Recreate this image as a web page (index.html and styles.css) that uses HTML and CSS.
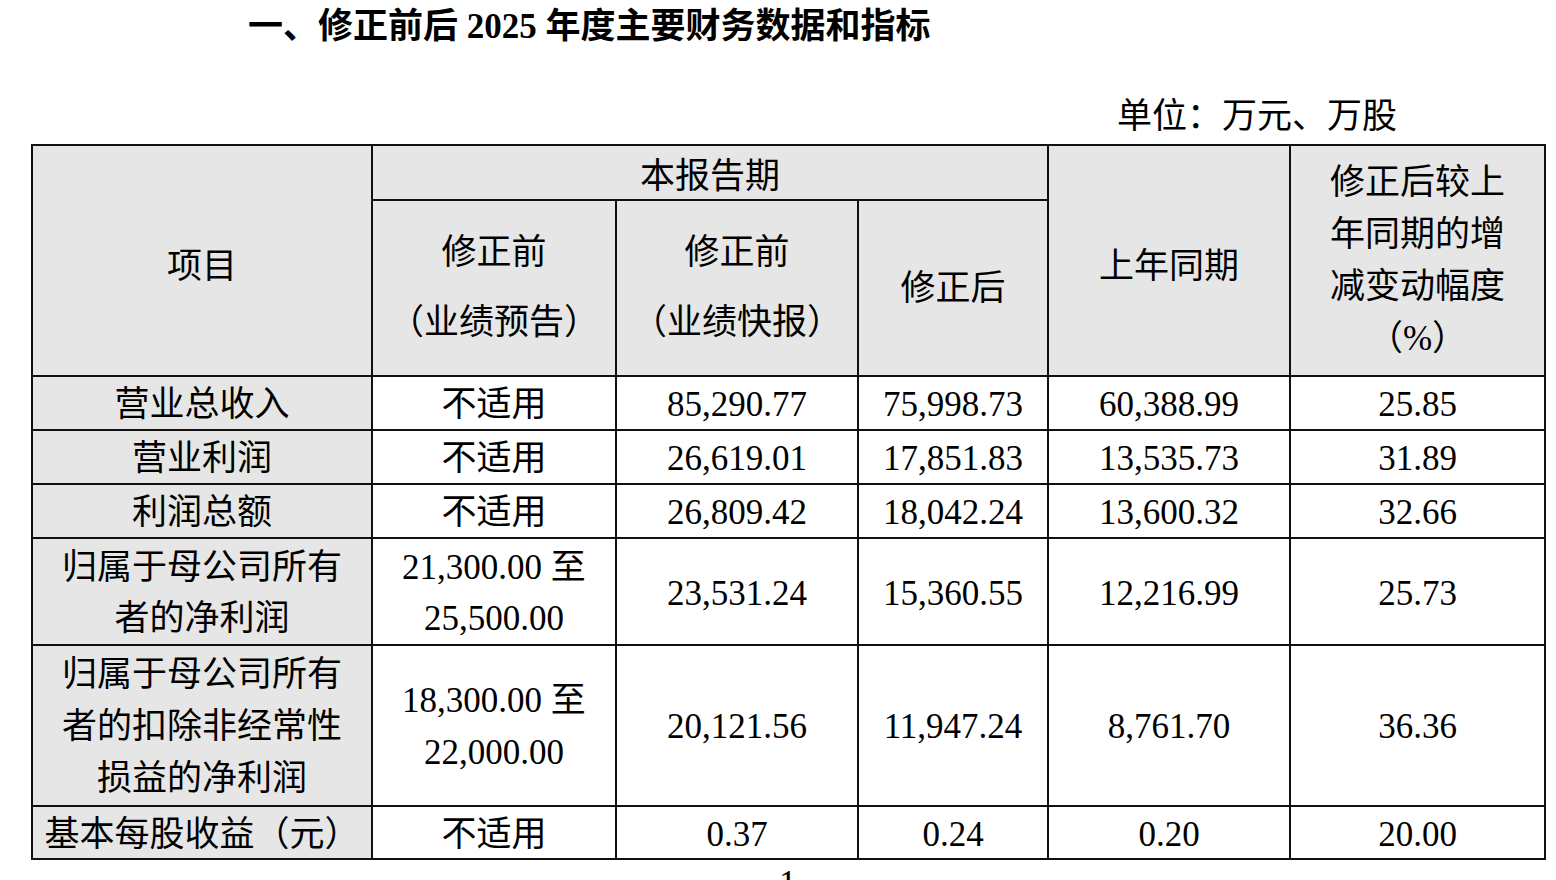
FILE: index.html
```html
<!DOCTYPE html>
<html lang="zh-CN">
<head>
<meta charset="utf-8">
<title>修正前后 2025 年度主要财务数据和指标</title>
<link rel="stylesheet" href="styles.css">
</head>
<body>
<div class="page">
  <h1 class="title">一、修正前后 2025 年度主要财务数据和指标</h1>
  <div class="unit">单位：万元、万股</div>
  <table class="fin">
    <colgroup>
      <col class="c1"><col class="c2"><col class="c3"><col class="c4"><col class="c5"><col class="c6">
    </colgroup>
    <thead>
      <tr class="r-h1">
        <th rowspan="2" class="tall">项目</th>
        <th colspan="3" class="group">本报告期</th>
        <th rowspan="2" class="tall">上年同期</th>
        <th rowspan="2" class="multi">修正后较上<br>年同期的增<br>减变动幅度<br>（%）</th>
      </tr>
      <tr class="r-h2">
        <th class="pair"><span>修正前</span><span>（业绩预告）</span></th>
        <th class="pair"><span>修正前</span><span>（业绩快报）</span></th>
        <th>修正后</th>
      </tr>
    </thead>
    <tbody>
      <tr class="r-1">
        <td class="item">营业总收入</td>
        <td>不适用</td>
        <td class="num">85,290.77</td>
        <td class="num">75,998.73</td>
        <td class="num">60,388.99</td>
        <td class="num">25.85</td>
      </tr>
      <tr class="r-1">
        <td class="item">营业利润</td>
        <td>不适用</td>
        <td class="num">26,619.01</td>
        <td class="num">17,851.83</td>
        <td class="num">13,535.73</td>
        <td class="num">31.89</td>
      </tr>
      <tr class="r-1">
        <td class="item">利润总额</td>
        <td>不适用</td>
        <td class="num">26,809.42</td>
        <td class="num">18,042.24</td>
        <td class="num">13,600.32</td>
        <td class="num">32.66</td>
      </tr>
      <tr class="r-2">
        <td class="item">归属于母公司所有<br>者的净利润</td>
        <td class="num">21,300.00 至<br>25,500.00</td>
        <td class="num">23,531.24</td>
        <td class="num">15,360.55</td>
        <td class="num">12,216.99</td>
        <td class="num">25.73</td>
      </tr>
      <tr class="r-3">
        <td class="item">归属于母公司所有<br>者的扣除非经常性<br>损益的净利润</td>
        <td class="num">18,300.00 至<br>22,000.00</td>
        <td class="num">20,121.56</td>
        <td class="num">11,947.24</td>
        <td class="num">8,761.70</td>
        <td class="num">36.36</td>
      </tr>
      <tr class="r-1b">
        <td class="item">基本每股收益（元）</td>
        <td>不适用</td>
        <td class="num">0.37</td>
        <td class="num">0.24</td>
        <td class="num">0.20</td>
        <td class="num">20.00</td>
      </tr>
    </tbody>
  </table>
  <div class="pageno">1</div>
</div>
</body>
</html>
```

FILE: styles.css
```css
html, body {
  margin: 0;
  padding: 0;
  background: #ffffff;
}

body {
  font-family: "Liberation Serif", "Noto Sans CJK SC", serif;
  color: #000;
  width: 1556px;
  height: 880px;
  overflow: hidden;
}

.page {
  padding-left: 31px;
}

.title {
  margin: 0;
  padding-left: 217px;
  font-size: 35px;
  font-weight: 700;
  line-height: 54px;
  height: 54px;
  white-space: nowrap;
}

.unit {
  margin-top: 37px;
  padding-right: 159px;
  text-align: right;
  font-size: 35px;
  line-height: 52px;
  height: 53px;
}

.fin {
  border-collapse: collapse;
  table-layout: fixed;
  width: 1515px;
  border: 2px solid #000;
  font-size: 35px;
}

.c1 { width: 340px; }
.c2 { width: 244px; }
.c3 { width: 242px; }
.c4 { width: 190px; }
.c5 { width: 242px; }
.c6 { width: 255px; }

.fin th,
.fin td {
  border: 2px solid #111;
  padding: 0;
  text-align: center;
  vertical-align: middle;
  line-height: 53px;
  white-space: nowrap;
}

.fin th {
  background: #e6e6e6;
  font-weight: 400;
}

.fin th.group {
  padding-top: 8px;
  line-height: 45px;
}

.fin th.tall {
  padding-top: 12px;
}

.fin th.multi {
  line-height: 52px;
}

.fin th.pair span {
  display: block;
  line-height: 70px;
}

.fin td.item {
  background: #e6e6e6;
}

.r-h1 { height: 55px; }
.r-h2 { height: 176px; }

.r-1 { height: 54px; }
.r-1 td {
  padding-top: 4px;
  line-height: 48px;
}

.r-2 { height: 107px; }
.r-2 td {
  padding-top: 3px;
  line-height: 51px;
}

.r-3 { height: 161px; }
.r-3 td {
  padding-top: 3px;
  line-height: 52px;
}

.r-1b { height: 53px; }
.r-1b td {
  padding-top: 4px;
  line-height: 47px;
}

.pageno {
  margin-top: 6px;
  padding-left: 748px;
  font-size: 35px;
  line-height: 35px;
}
```
